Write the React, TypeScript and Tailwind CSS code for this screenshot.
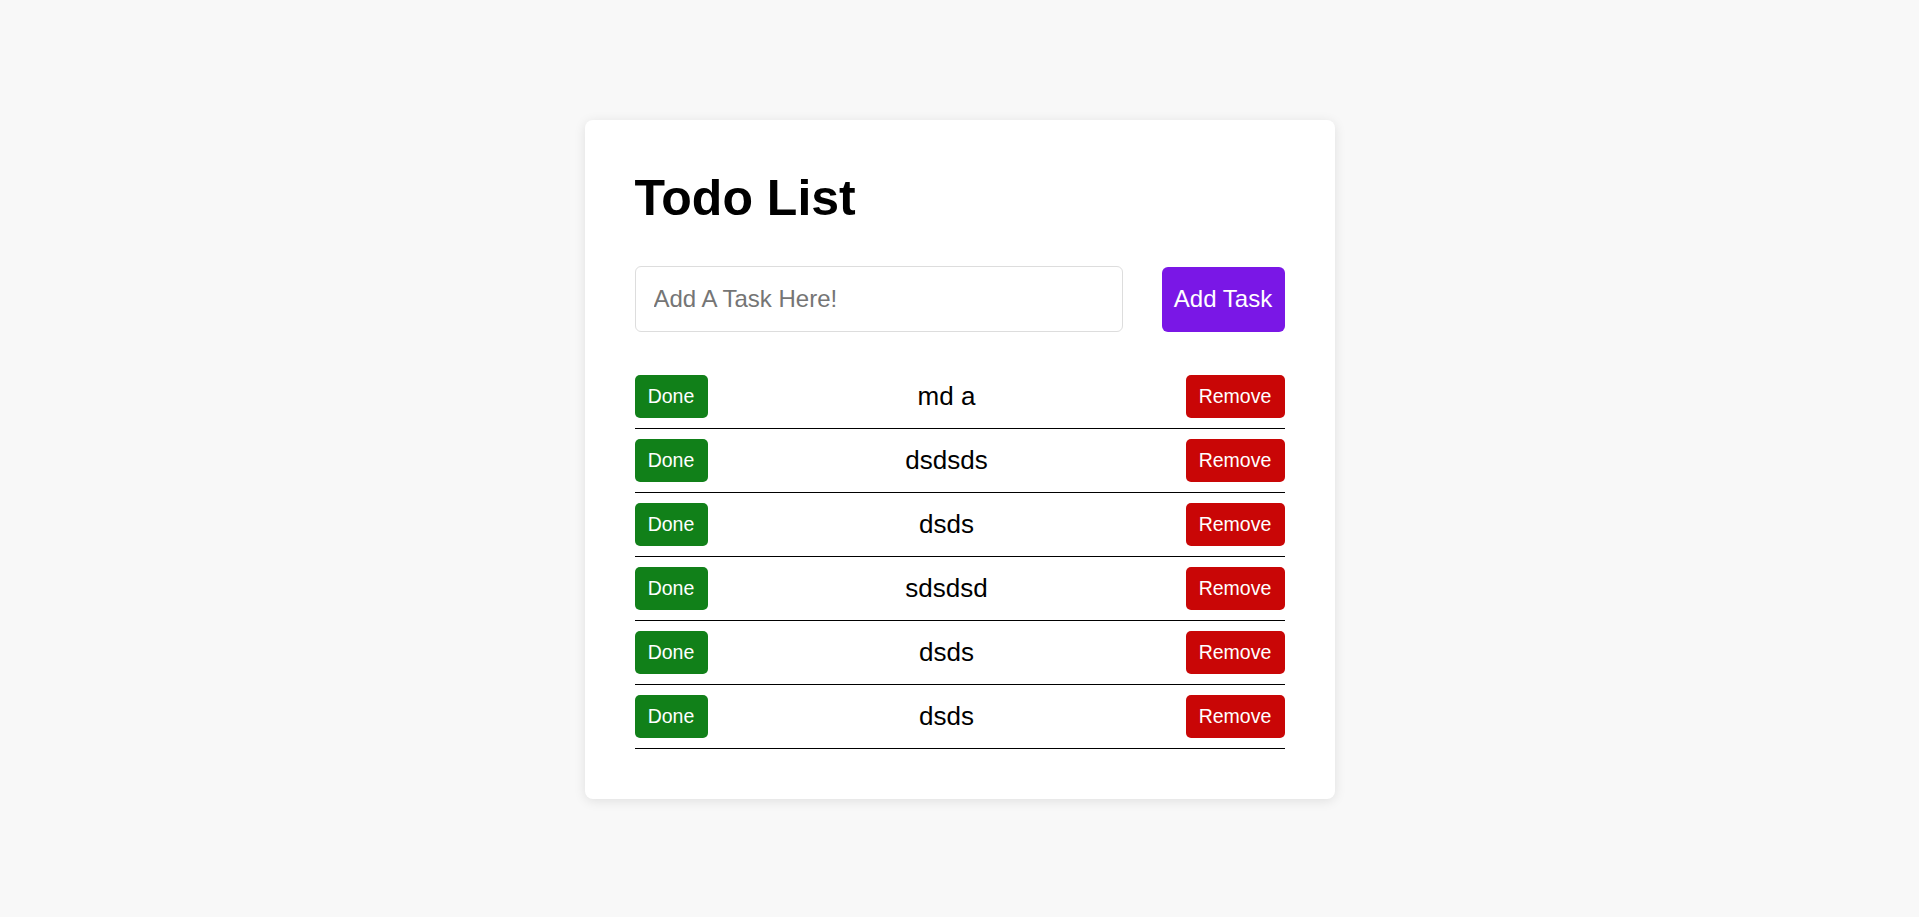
import React from "react";

const tasks = ["md a", "dsdsds", "dsds", "sdsdsd", "dsds", "dsds"];

export default function App() {
  return (
    <div
      className="min-h-screen w-full bg-[#f8f8f8] pt-[120px]"
      style={{ fontFamily: '"Liberation Sans", Arial, sans-serif' }}
    >
      <div className="mx-auto w-[750px] rounded-lg bg-white p-[50px] shadow-[0_2px_12px_rgba(0,0,0,0.1)]">
        <h1 className="text-[50px] font-bold leading-[56px] text-black">Todo List</h1>
        <div className="mt-[40px] flex items-center justify-between">
          <input
            type="text"
            placeholder="Add A Task Here!"
            className="h-[66px] w-[488px] rounded-[6px] border border-[#dddddd] bg-white pl-[18px] text-[24px] text-black outline-none placeholder:text-[#757575]"
          />
          <button className="h-[65px] w-[123px] rounded-[6px] bg-[#7a17e6] text-[24px] text-white">
            Add Task
          </button>
        </div>
        <div className="mt-[33px] flex flex-col">
          {tasks.map((t, i) => (
            <div key={i} className="flex items-center border-b border-black py-[10px]">
              <button className="h-[43px] w-[73px] rounded-[5px] bg-[#118019] text-[19.5px] text-white">
                Done
              </button>
              <div className="flex-1 text-center text-[26px] text-black">{t}</div>
              <button className="h-[43px] w-[99px] rounded-[5px] bg-[#c90606] text-[19.5px] text-white">
                Remove
              </button>
            </div>
          ))}
        </div>
      </div>
    </div>
  );
}
